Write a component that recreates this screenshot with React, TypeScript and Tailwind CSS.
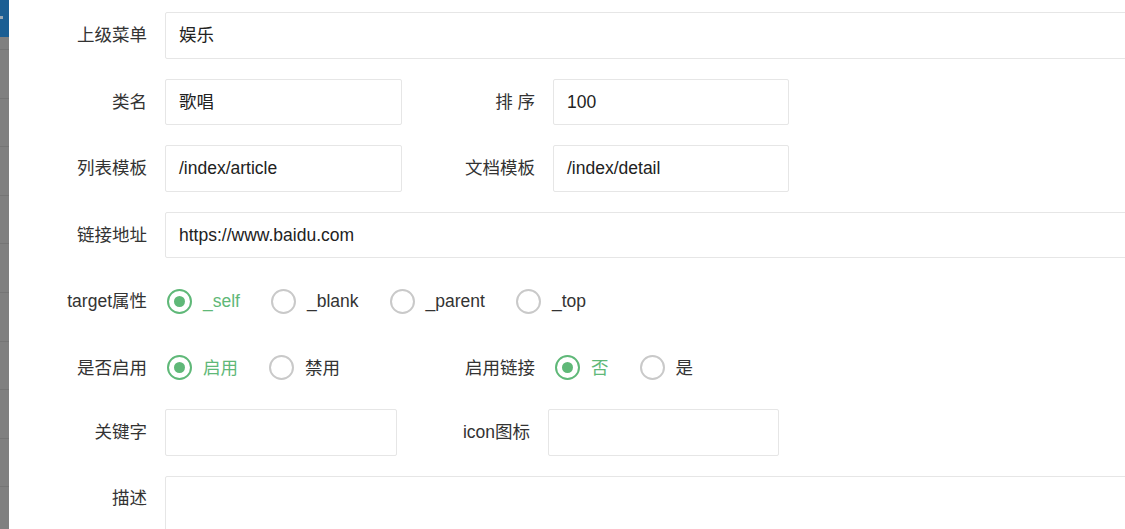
import React from "react";

const font = { fontFamily: '"Liberation Sans", "Noto Sans CJK SC", sans-serif' };

const Radio = ({ label, checked }: { label: string; checked?: boolean }) => (
  <div className="flex items-center mr-[31px]">
    <span
      className={`w-[25px] h-[25px] rounded-full border-2 flex items-center justify-center ${
        checked ? "border-[#5FB878]" : "border-[#c9c9c9]"
      }`}
    >
      {checked && <span className="w-[11px] h-[11px] rounded-full bg-[#5FB878]" />}
    </span>
    <span className={`ml-[11px] ${checked ? "text-[#5FB878]" : "text-[#333]"}`}>{label}</span>
  </div>
);

const Label = ({ text, first }: { text: string; first?: boolean }) => (
  <div className={`${first ? "w-[165px]" : "w-[151px]"} pr-[18px] text-right text-[#333] shrink-0`}>{text}</div>
);

const Input = ({ value, w }: { value?: string; w?: string }) => (
  <div
    className={`${w ?? "flex-1"} h-full border border-[#e6e6e6] rounded-[2px] bg-white pl-[13px] flex items-center text-[#222] shrink-0`}
  >
    {value}
  </div>
);

const Sidebar = () => (
  <div className="w-[9px] h-full bg-[#808080] flex flex-col shrink-0 relative z-10">
    <div className="h-[37px] bg-[#1b5e93] relative shrink-0">
      <span className="absolute left-0 top-[16px] w-[3px] h-[3px] bg-[#9aa8b4]" />
    </div>
    <div className="h-[12px] shrink-0" />
    {Array.from({ length: 10 }).map((_, i) => (
      <div key={i} className="h-[48.6px] border-t border-[#757575] shrink-0" />
    ))}
  </div>
);

const Row = ({ children, className }: { children: React.ReactNode; className?: string }) => (
  <div className={`flex items-center shrink-0 ${className ?? "h-[46.5px]"}`}>{children}</div>
);

export default function App() {
  return (
    <div className="w-[1125px] h-[529px] overflow-hidden bg-white flex text-[17.5px]" style={font}>
      <Sidebar />
      <div className="flex flex-col pt-[12px] gap-[20px] -ml-[9px] w-[1300px] min-w-[1300px] shrink-0">
        <Row>
          <Label text="上级菜单" first />
          <Input value="娱乐" />
        </Row>
        <Row>
          <Label text="类名" first />
          <Input value="歌唱" w="w-[237px]" />
          <Label text="排 序" />
          <Input value="100" w="w-[236px]" />
        </Row>
        <Row>
          <Label text="列表模板" first />
          <Input value="/index/article" w="w-[237px]" />
          <Label text="文档模板" />
          <Input value="/index/detail" w="w-[236px]" />
        </Row>
        <Row>
          <Label text="链接地址" first />
          <Input value="https://www.baidu.com" />
        </Row>
        <Row>
          <Label text="target属性" first />
          <div className="flex items-center pl-[2px]">
            <Radio label="_self" checked />
            <Radio label="_blank" />
            <Radio label="_parent" />
            <Radio label="_top" />
          </div>
        </Row>
        <Row>
          <Label text="是否启用" first />
          <div className="flex items-center w-[237px] pl-[2px]">
            <Radio label="启用" checked />
            <Radio label="禁用" />
          </div>
          <Label text="启用链接" />
          <div className="flex items-center pl-[2px]">
            <Radio label="否" checked />
            <Radio label="是" />
          </div>
        </Row>
        <Row className="h-[47px] -mt-[2px]">
          <Label text="关键字" first />
          <Input w="w-[232px]" />
          <Label text="icon图标" />
          <Input w="w-[231px]" />
        </Row>
        <div className="flex items-start h-[120px] shrink-0">
          <div className="w-[165px] pr-[18px] text-right text-[#333] shrink-0 pt-[9px]">描述</div>
          <div className="flex-1 h-full border border-[#e6e6e6] rounded-[2px]" />
        </div>
      </div>
    </div>
  );
}
